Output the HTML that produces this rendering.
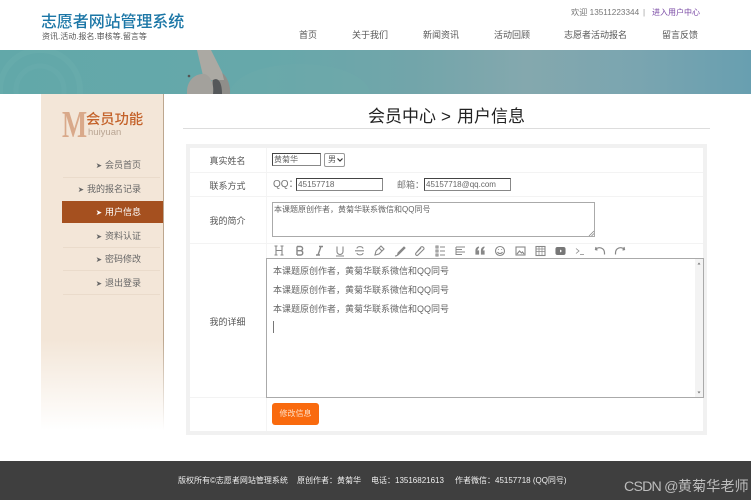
<!DOCTYPE html>
<html lang="zh"><head><meta charset="utf-8"><title>用户信息</title>
<style>
*{box-sizing:border-box}
html,body{margin:0;padding:0}
body{width:751px;height:500px;position:relative;overflow:hidden;background:#fff;font-family:"Liberation Sans","Noto Sans CJK SC",sans-serif;color:#555;filter:blur(.3px)}
.a{position:absolute;white-space:nowrap}
.nav{top:28px;font-size:9px;line-height:14px;color:#555}
.side{left:62px;width:101px;height:23px;line-height:23px;font-size:9px;color:#666;text-align:right;padding-right:22px}
.side i{font-style:normal;font-size:7.500px;margin-right:3px}
.sl{left:63px;width:97px;height:1px;background:#eadbcb}
.lab{left:190px;width:75px;text-align:center;font-size:9px;color:#555;line-height:14px}
.hl{left:190px;width:513px;height:1px;background:#f3f3f3}
.in{border:1px solid #888;border-top-color:#444;border-left-color:#444;background:#fff;font-size:8px;color:#666;line-height:12px;padding-left:1px}
.ed{left:273px;font-size:9px;color:#666;line-height:12px}
.ft{top:475px;font-size:8px;line-height:12px;color:#f0f0f0}
svg{position:absolute;overflow:visible}
</style></head><body>

<div class="a" style="left:41px;top:13px;font-size:16px;line-height:20px;color:#1b76a6;font-weight:500;letter-spacing:-.1px">志愿者网站管理系统</div>
<div class="a" style="left:42px;top:31px;font-size:8px;line-height:12px;color:#555">资讯.活动.报名.审核等.留言等</div>

<div class="a" style="left:571px;top:7px;font-size:8.200px;line-height:12px;color:#777">欢迎 13511223344</div>
<div class="a" style="left:643px;top:7px;font-size:8px;line-height:12px;color:#999">|</div>
<div class="a" style="left:652px;top:7px;font-size:8px;line-height:12px;color:#7a4aa5">进入用户中心</div>

<div class="a nav" style="left:299px">首页</div>
<div class="a nav" style="left:352px">关于我们</div>
<div class="a nav" style="left:423px">新闻资讯</div>
<div class="a nav" style="left:494px">活动回顾</div>
<div class="a nav" style="left:564px">志愿者活动报名</div>
<div class="a nav" style="left:662px">留言反馈</div>

<!-- banner -->
<div class="a" style="left:0;top:50px;width:751px;height:44px;overflow:hidden;background:linear-gradient(90deg,#62a8a9 0%,#66a8aa 35%,#72a5aa 55%,#84a8ae 70%,#7aa5b0 85%,#689fb0 100%)">
<svg width="751" height="44" style="left:0;top:0">
<circle cx="40" cy="40" r="40" fill="none" stroke="#6eaeae" stroke-width="6" opacity=".4"/>
<circle cx="40" cy="40" r="24" fill="none" stroke="#6eaeae" stroke-width="5" opacity=".35"/>
<ellipse cx="300" cy="44" rx="70" ry="30" fill="#70acad" opacity=".35"/>
<path d="M212 20C222 18 231 30 230 44H212Z" fill="#8f8e8a"/>
<path d="M197 0H211L222 22L224 30H204Z" fill="#aba9a3"/>
<path d="M213 30C218 27 222 32 222 44H212Z" fill="#55585a"/>
<path d="M187 44C186 30 196 23 205 24C212 27 214 36 213 44Z" fill="#a3a19c"/>
<circle cx="189" cy="26" r="1.300" fill="#555"/>
</svg>
</div>

<!-- sidebar -->
<div class="a" style="left:41px;top:94px;width:123px;height:336px;background:linear-gradient(180deg,#f3e6d8 0%,#f3e6d8 73%,#fff 100%)"></div>
<div class="a" style="left:163px;top:94px;width:1px;height:336px;background:linear-gradient(180deg,#bda78f 0%,#bda78f 73%,#fff 100%)"></div>
<div class="a" style="left:62px;top:104px;font-family:'Liberation Serif',serif;font-size:38px;line-height:42px;color:#d9a98a;font-weight:700;transform:scaleX(.7);transform-origin:left top">M</div>
<div class="a" style="left:86px;top:111px;font-size:14.300px;line-height:18px;color:#c4622a;font-weight:500">会员功能</div>
<div class="a" style="left:88px;top:127px;font-size:9.500px;line-height:12px;color:#b9a593">huiyuan</div>

<div class="a side" style="top:154px"><i>&#10148;</i>会员首页</div>
<div class="a sl" style="top:177px"></div>
<div class="a side" style="top:178px"><i>&#10148;</i>我的报名记录</div>
<div class="a side" style="top:201px;height:22px;line-height:22px;background:#a5501f;color:#fff"><i>&#10148;</i>用户信息</div>
<div class="a side" style="top:225px"><i>&#10148;</i>资料认证</div>
<div class="a sl" style="top:247px"></div>
<div class="a side" style="top:248px"><i>&#10148;</i>密码修改</div>
<div class="a sl" style="top:270px"></div>
<div class="a side" style="top:272px"><i>&#10148;</i>退出登录</div>
<div class="a sl" style="top:294px"></div>

<!-- title -->
<div class="a" style="left:368px;top:105px;font-size:17px;line-height:23px;color:#222">会员中心</div>
<div class="a" style="left:441px;top:105px;font-size:17px;line-height:23px;color:#222">&gt;</div>
<div class="a" style="left:457px;top:105px;font-size:17px;line-height:23px;color:#222">用户信息</div>
<div class="a" style="left:183px;top:128px;width:527px;height:1px;background:#ddd"></div>

<!-- form -->
<div class="a" style="left:186px;top:144px;width:521px;height:291px;border:4px solid #f1f1f1;background:#fff"></div>
<div class="a" style="left:266px;top:148px;width:1px;height:283px;background:#f4f4f4"></div>
<div class="a hl" style="top:172px"></div>
<div class="a hl" style="top:196px"></div>
<div class="a hl" style="top:243px"></div>
<div class="a hl" style="top:397px"></div>

<div class="a lab" style="top:154px">真实姓名</div>
<div class="a lab" style="top:179px">联系方式</div>
<div class="a lab" style="top:214px">我的简介</div>
<div class="a lab" style="top:315px">我的详细</div>

<div class="a in" style="left:272px;top:153px;width:49px;height:13px">黄菊华</div>
<div class="a" style="left:324px;top:153px;width:21px;height:14px;border:1px solid #999;border-radius:2px;font-size:8px;line-height:12px;padding-left:3px;color:#555">男
<svg width="6" height="4" style="left:12px;top:4px"><path d="M.5.5L3 3 5.500.5" fill="none" stroke="#333" stroke-width="1.200"/></svg></div>

<div class="a" style="left:273px;top:178px;font-size:10px;line-height:14px;color:#777">QQ：</div>
<div class="a in" style="left:296px;top:178px;width:87px;height:13px;font-size:8.200px">45157718</div>
<div class="a" style="left:397px;top:178px;font-size:9px;line-height:14px;color:#777">邮箱：</div>
<div class="a in" style="left:424px;top:178px;width:87px;height:13px;font-size:8px">45157718@qq.com</div>

<div class="a" style="left:272px;top:202px;width:323px;height:35px;border:1px solid #aaa;font-size:8px;line-height:13px;color:#666;padding-left:1px">本课题原创作者，黄菊华联系微信和QQ同号
<svg width="6" height="6" style="left:315px;top:27px"><path d="M1 6L6 1M3.500 6L6 3.500" stroke="#888" stroke-width=".8"/></svg></div>

<!-- toolbar -->
<svg width="360" height="14" style="left:272px;top:244px" fill="none" stroke="#888" stroke-width="1.100">
<path d="M4 2v9M10 2v9M4 6.500h6M2.500 2h3M8.500 2h3M2.500 11h3M8.500 11h3"/>
<path d="M25 2.500v8.500M25 2.500h3.500a2 2 0 010 4.200H25M25 6.700h4a2.200 2.200 0 010 4.300h-4" stroke-width="1.400"/>
<path d="M47 2.500h4M44 11h4M49 2.500L46 11" stroke-width="1.400"/>
<path d="M65 2.500v5a3 3 0 006 0v-5M64 12h8"/>
<path d="M85 4.500c0-2.500 5.500-2.500 6 0M91 9c0 2.500-6 2.500-6 0M83 6.800h9"/>
<path d="M103 11l1-4 5-5 3 3-5 5zM107 4l3 3"/>
<path d="M123 12c2 0 3-1 3-3l6-6 1 1-6 6c-1 1-2 2-4 2z" fill="#888"/>
<path d="M144 9l5-6a2 2 0 013 2l-6 6a1.400 1.400 0 01-2-2l5-5"/>
<path d="M168 3h5M168 7h5M168 11h5M164 2h2v2h-2zM164 6h2v2h-2zM164 10h2v2h-2z"/>
<path d="M184 3h9M184 5.500h6M184 8h9M184 10.500h6M184 3v8" stroke-width="1"/>
<path d="M204 9V6.500c0-2 1-3 3-3.500M204 7h2.500v3H204zM209.500 9V6.500c0-2 1-3 3-3.500M209.500 7h2.500v3h-2.500z" stroke-width="1.200" fill="#888"/>
<circle cx="228" cy="7" r="4.500"/><path d="M225.500 8c1 2 4 2 5 0M226 5.500h.8M229.300 5.500h.8"/>
<rect x="244" y="3" width="9" height="8"/><path d="M245 10l2.500-3 2 2 1-1 1.500 2"/>
<rect x="264" y="2.500" width="9" height="9"/><path d="M264 5h9M264 7.500h9M267 2.500v9M270 2.500v9" stroke-width=".7"/>
<rect x="284" y="3.500" width="9" height="7" rx="1.500" fill="#777" stroke="#777"/><path d="M288 5.500l2 1.500-2 1.500z" fill="#fff" stroke="none"/>
<path d="M304 4.500l3 2.500-3 2.500M308 10.500h4" stroke-width=".8"/>
<path d="M325.500 6l-2-.5.500-2.500M323.500 5.500c3.500-3.500 9-1.500 9 3.500v1.500" stroke-width="1.200"/>
<path d="M350.500 6l2-.5-.5-2.500M352.500 5.500c-3.500-3.500-9-1.500-9 3.500v1.500" stroke-width="1.200"/>
</svg>

<!-- editor -->
<div class="a" style="left:266px;top:258px;width:438px;height:140px;border:1px solid #aaa;background:#fff"></div>
<div class="a" style="left:695px;top:259px;width:8px;height:138px;background:#f3f3f3"></div>
<svg width="8" height="138" style="left:695px;top:259px"><path d="M2.500 5.500L4 3.500 5.500 5.500z M2.500 132.500L4 134.500 5.500 132.500z" fill="#777"/></svg>
<div class="a ed" style="top:265px">本课题原创作者，黄菊华联系微信和QQ同号</div>
<div class="a ed" style="top:284px">本课题原创作者，黄菊华联系微信和QQ同号</div>
<div class="a ed" style="top:303px">本课题原创作者，黄菊华联系微信和QQ同号</div>
<div class="a" style="left:273px;top:321px;width:1px;height:12px;background:#777"></div>

<div class="a" style="left:272px;top:403px;width:47px;height:22px;background:#f96a0e;border-radius:3px;color:#fde0c8;font-size:8px;line-height:22px;text-align:center">修改信息</div>

<!-- footer -->
<div class="a" style="left:0;top:461px;width:751px;height:39px;background:#3f3f3f"></div>
<div class="a ft" style="left:178px">版权所有©志愿者网站管理系统</div>
<div class="a ft" style="left:297px">原创作者：黄菊华</div>
<div class="a ft" style="left:371px">电话：13516821613</div>
<div class="a ft" style="left:455px">作者微信：45157718 (QQ同号)</div>
<div class="a" style="left:624px;top:478px;font-size:14.200px;line-height:18px;color:#bdbdbd"><span style="letter-spacing:-.8px">CSDN @</span>黄菊华老师</div>
</body></html>
